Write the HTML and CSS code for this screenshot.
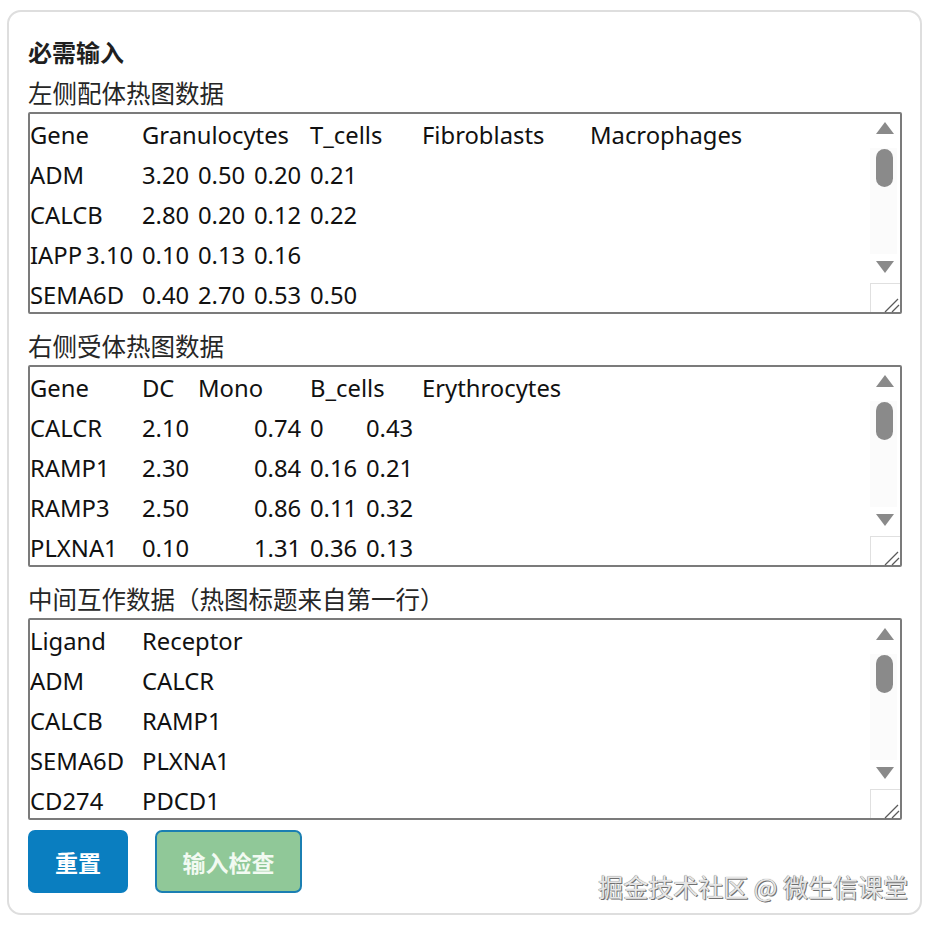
FILE: index.html
```html
<!DOCTYPE html>
<html lang="zh-CN">
<head>
<meta charset="utf-8">
<title>必需输入</title>
<link rel="stylesheet" href="styles.css">
</head>
<body>
<div class="card">
  <div class="heading">必需输入</div>
  <div class="label">左侧配体热图数据</div>
  <div class="field">
    <textarea class="data" spellcheck="false">Gene	Granulocytes	T_cells	Fibroblasts	Macrophages
ADM	3.20	0.50	0.20	0.21
CALCB	2.80	0.20	0.12	0.22
IAPP	3.10	0.10	0.13	0.16
SEMA6D	0.40	2.70	0.53	0.50
CD274	0.30	0.42	1.80	2.10
CCL2	0.62	0.31	2.40	1.95
CXCL12	0.15	0.22	3.05	0.48
TGFB1	1.10	1.35	0.92	1.60
VEGFA	0.88	0.24	1.12	1.44
IL1B	2.65	0.33	0.18	2.92
TNF	0.71	1.85	0.09	1.26
SPP1	0.12	0.05	0.64	3.30</textarea>
    <div class="vscroll" aria-hidden="true">
      <div class="sb-btn sb-up"><svg width="30" height="34" viewBox="0 0 30 34"><polygon points="15,8 24,20 6,20" fill="#8a8a8a"/></svg></div>
      <div class="sb-track"><div class="sb-thumb"></div></div>
      <div class="sb-btn sb-down"><svg width="30" height="29" viewBox="0 0 30 29"><polygon points="6,7 24,7 15,19" fill="#8a8a8a"/></svg></div>
      <div class="sb-corner"><svg width="29" height="29" viewBox="0 0 29 29"><line x1="14" y1="28" x2="27" y2="15" stroke="#5a5a5a" stroke-width="1.3"/><line x1="21" y1="28" x2="28" y2="21" stroke="#5a5a5a" stroke-width="1.3"/></svg></div>
    </div>
  </div>

  <div class="label">右侧受体热图数据</div>
  <div class="field">
    <textarea class="data" spellcheck="false">Gene	DC	Mono	B_cells	Erythrocytes
CALCR	2.10		0.74	0	0.43
RAMP1	2.30		0.84	0.16	0.21
RAMP3	2.50		0.86	0.11	0.32
PLXNA1	0.10		1.31	0.36	0.13
PDCD1	0.45		0.22	1.08	0.05
CCR2	1.62		2.85	0.14	0.02
CXCR4	1.20		1.45	2.30	0.11
TGFBR1	0.93		1.02	0.41	0.27
KDR	0.08		0.15	0.03	0.09
IL1R1	0.56		0.74	0.22	0.04
TNFRSF1A	1.34		1.88	0.65	0.12
CD44	2.05		2.40	1.15	0.31</textarea>
    <div class="vscroll" aria-hidden="true">
      <div class="sb-btn sb-up"><svg width="30" height="34" viewBox="0 0 30 34"><polygon points="15,8 24,20 6,20" fill="#8a8a8a"/></svg></div>
      <div class="sb-track"><div class="sb-thumb"></div></div>
      <div class="sb-btn sb-down"><svg width="30" height="29" viewBox="0 0 30 29"><polygon points="6,7 24,7 15,19" fill="#8a8a8a"/></svg></div>
      <div class="sb-corner"><svg width="29" height="29" viewBox="0 0 29 29"><line x1="14" y1="28" x2="27" y2="15" stroke="#5a5a5a" stroke-width="1.3"/><line x1="21" y1="28" x2="28" y2="21" stroke="#5a5a5a" stroke-width="1.3"/></svg></div>
    </div>
  </div>

  <div class="label">中间互作数据（热图标题来自第一行）</div>
  <div class="field">
    <textarea class="data" spellcheck="false">Ligand	Receptor
ADM	CALCR
CALCB	RAMP1
SEMA6D	PLXNA1
CD274	PDCD1
IAPP	RAMP3
CCL2	CCR2
CXCL12	CXCR4
TGFB1	TGFBR1
VEGFA	KDR
IL1B	IL1R1
TNF	TNFRSF1A
SPP1	CD44</textarea>
    <div class="vscroll" aria-hidden="true">
      <div class="sb-btn sb-up"><svg width="30" height="34" viewBox="0 0 30 34"><polygon points="15,8 24,20 6,20" fill="#8a8a8a"/></svg></div>
      <div class="sb-track"><div class="sb-thumb"></div></div>
      <div class="sb-btn sb-down"><svg width="30" height="29" viewBox="0 0 30 29"><polygon points="6,7 24,7 15,19" fill="#8a8a8a"/></svg></div>
      <div class="sb-corner"><svg width="29" height="29" viewBox="0 0 29 29"><line x1="14" y1="28" x2="27" y2="15" stroke="#5a5a5a" stroke-width="1.3"/><line x1="21" y1="28" x2="28" y2="21" stroke="#5a5a5a" stroke-width="1.3"/></svg></div>
    </div>
  </div>

  <div class="actions">
    <button class="btn btn-reset" type="button">重置</button>
    <button class="btn btn-check" type="button">输入检查</button>
  </div>
  <div class="watermark">掘金技术社区 @ 微生信课堂</div>
</div>
</body>
</html>
```

FILE: styles.css
```css
html, body {
  margin: 0;
  padding: 0;
  background: #ffffff;
}

body {
  font-family: "Noto Sans", "Noto Sans CJK SC", sans-serif;
  color: #222222;
}

.card {
  position: relative;
  box-sizing: border-box;
  width: 915px;
  height: 905px;
  margin: 10px 0 0 7px;
  padding: 20px 18px 20px 19px;
  border: 2px solid #dedede;
  border-radius: 14px;
  display: flex;
  flex-direction: column;
}

.heading {
  font-family: "Noto Sans CJK SC", sans-serif;
  font-size: 24px;
  font-weight: 700;
  line-height: 40px;
  color: #1f1f1f;
}

.label {
  box-sizing: border-box;
  font-family: "Noto Sans CJK SC", sans-serif;
  font-size: 24.5px;
  line-height: 40px;
  height: 40px;
  padding-top: 1px;
  color: #262626;
  white-space: nowrap;
}

.field {
  display: flex;
  box-sizing: border-box;
  width: 874px;
  height: 202px;
  margin: 0 0 11px 0;
  border: 2px solid #7b7b7b;
  border-radius: 2px;
  background: #ffffff;
}

.data {
  flex: 1;
  min-width: 0;
  box-sizing: border-box;
  height: 100%;
  margin: 0;
  padding: 1px 0 0 0;
  border: none;
  font-family: "Noto Sans", "Noto Sans CJK SC", sans-serif;
  font-size: 23.8px;
  line-height: 40px;
  color: #111111;
  tab-size: 56px;
  -moz-tab-size: 56px;
  white-space: pre;
  overflow: hidden;
  resize: none;
  outline: none;
  background: transparent;
}

.vscroll {
  flex: 0 0 30px;
  display: flex;
  flex-direction: column;
  background: #ffffff;
}

.sb-btn svg,
.sb-corner svg {
  display: block;
}

.sb-up {
  height: 34px;
}

.sb-track {
  flex: 1;
  background: #fbfbfb;
  margin: 0 3px 0 0;
}

.sb-thumb {
  width: 17px;
  height: 38px;
  margin: 1px 0 0 6px;
  border-radius: 9px;
  background: #8a8a8a;
}

.sb-down {
  height: 29px;
}

.sb-corner {
  box-sizing: border-box;
  height: 29px;
  border-top: 1px solid #e0e0e0;
  border-left: 1px solid #e0e0e0;
}

.actions {
  display: flex;
  gap: 27px;
  margin-top: -1px;
}

.btn {
  box-sizing: border-box;
  height: 63px;
  border-radius: 7px;
  font-family: "Noto Sans CJK SC", sans-serif;
  font-size: 23px;
  font-weight: 600;
  cursor: pointer;
}

.btn-reset {
  width: 100px;
  background: #0a7ec0;
  border: 2px solid #0a7ec0;
  color: #ffffff;
}

.btn-check {
  width: 147px;
  background: #90c898;
  border: 2px solid #1b7fb2;
  color: #f2faf2;
}

.watermark {
  position: absolute;
  right: 12px;
  bottom: 12px;
  font-family: "Noto Sans CJK SC", sans-serif;
  font-size: 25px;
  line-height: 30px;
  color: #e6e6e6;
  text-shadow: 1px 1px 0 #707070, -0.5px -0.5px 0 #9a9a9a, 0 0 1px #777777;
  white-space: nowrap;
}
```
